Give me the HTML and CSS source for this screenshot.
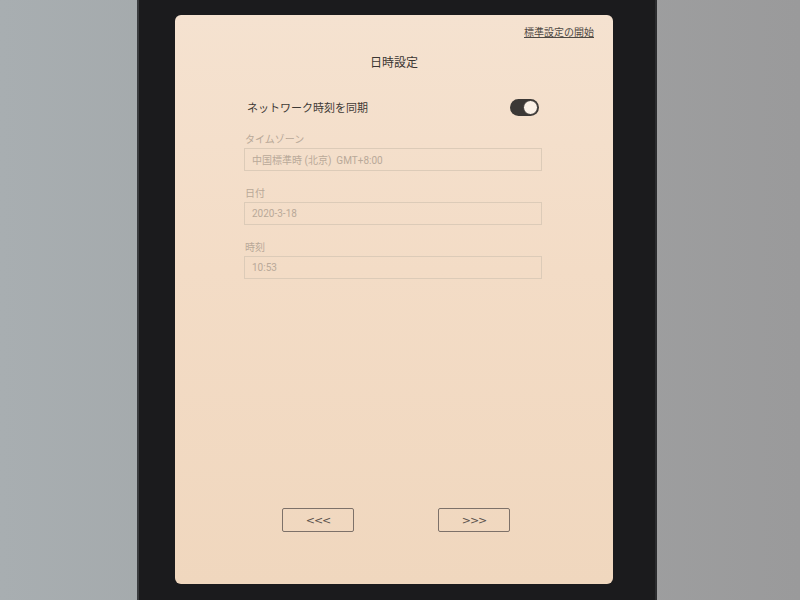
FILE: index.html
```html
<!DOCTYPE html>
<html lang="ja">
<head>
    <meta charset="UTF-8">
    <meta name="viewport" content="width=device-width, initial-scale=1.0">
    <title>日時設定</title>
    <link rel="stylesheet" href="styles.css">
</head>
<body>
    <div class="device">
        <div class="screen">
            <!-- 上部リンク -->
            <div class="top-bar">
                <a class="skip-link" href="#">標準設定の開始</a>
            </div>

            <h1 class="page-title">日時設定</h1>

            <div class="settings">
                <div class="switch-row">
                    <span>ネットワーク時刻を同期</span>
                    <span class="toggle on"><span class="knob"></span></span>
                </div>

                <div class="field">
                    <label>タイムゾーン</label>
                    <div class="input">中国標準時 (北京)&nbsp;&nbsp;GMT+8:00</div>
                </div>

                <div class="field">
                    <label>日付</label>
                    <div class="input">2020-3-18</div>
                </div>

                <div class="field">
                    <label>時刻</label>
                    <div class="input">10:53</div>
                </div>
            </div>

            <!-- ページ送り -->
            <div class="nav-buttons">
                <button class="nav-btn">&lt;&lt;&lt;</button>
                <button class="nav-btn">&gt;&gt;&gt;</button>
            </div>
        </div>
    </div>
</body>
</html>
```

FILE: styles.css
```css
* {
    margin: 0;
    padding: 0;
    box-sizing: border-box;
}

body, html {
    width: 100%;
    height: 100%;
    overflow: hidden;
    font-family: Roboto, "Noto Sans CJK JP", sans-serif;
}

body {
    background: linear-gradient(90deg, #a8aeb1 0%, #a3a8aa 30%, #9fa0a1 70%, #9a9a9b 100%);
    display: flex;
    justify-content: center;
}

.device {
    width: 520px;
    height: 620px;
    margin-top: -20px;
    margin-left: -6px;
    padding: 35px 42px 0 36px;
    background: #1b1b1d;
    border-left: 2px solid #3a3c3f;
    border-right: 2px solid #2c2d2f;
}

.screen {
    height: 569px;
    border-radius: 6px;
    background: linear-gradient(180deg, #f5e2d0 0%, #f3dcc6 45%, #f0d7be 100%);
    display: flex;
    flex-direction: column;
    padding: 9px 19px 52px 69px;
    color: #3a3532;
}

.top-bar {
    display: flex;
    justify-content: flex-end;
    height: 20px;
}

.skip-link {
    font-size: 10px;
    color: #4e4843;
    text-decoration: underline;
}

.page-title {
    font-size: 12px;
    font-weight: 400;
    text-align: center;
    margin: 9px 50px 0 0;
    color: #3a3532;
}

.settings {
    width: 298px;
    margin-top: 28px;
}

.switch-row {
    display: flex;
    justify-content: space-between;
    align-items: center;
    font-size: 11px;
    padding: 0 3px 0 3px;
    height: 18px;
    color: #3e3935;
}

.toggle {
    width: 29px;
    height: 17px;
    border-radius: 9px;
    background: #3b3836;
    display: flex;
    align-items: center;
    justify-content: flex-end;
    padding: 1px;
}

.knob {
    width: 15px;
    height: 15px;
    border-radius: 50%;
    background: #fbf1e7;
    border: 1px solid #3b3836;
}

.field {
    margin-top: 15px;
}

.field + .field {
    margin-top: 14px;
}

.field label {
    display: block;
    font-size: 10px;
    color: #b8a898;
    margin-bottom: 2px;
    padding-left: 1px;
}

.input {
    height: 23px;
    border: 1px solid #dccbb8;
    font-size: 10px;
    color: #b9a999;
    display: flex;
    align-items: center;
    padding-left: 7px;
}

.nav-buttons {
    margin-top: auto;
    width: 228px;
    margin-left: 38px;
    display: flex;
    justify-content: space-between;
}

.nav-btn {
    width: 72px;
    height: 24px;
    background: transparent;
    border: 1px solid #7d7169;
    border-radius: 2px;
    font-family: "DejaVu Sans", sans-serif;
    font-size: 11px;
    letter-spacing: -1px;
    color: #5a524c;
}
```
